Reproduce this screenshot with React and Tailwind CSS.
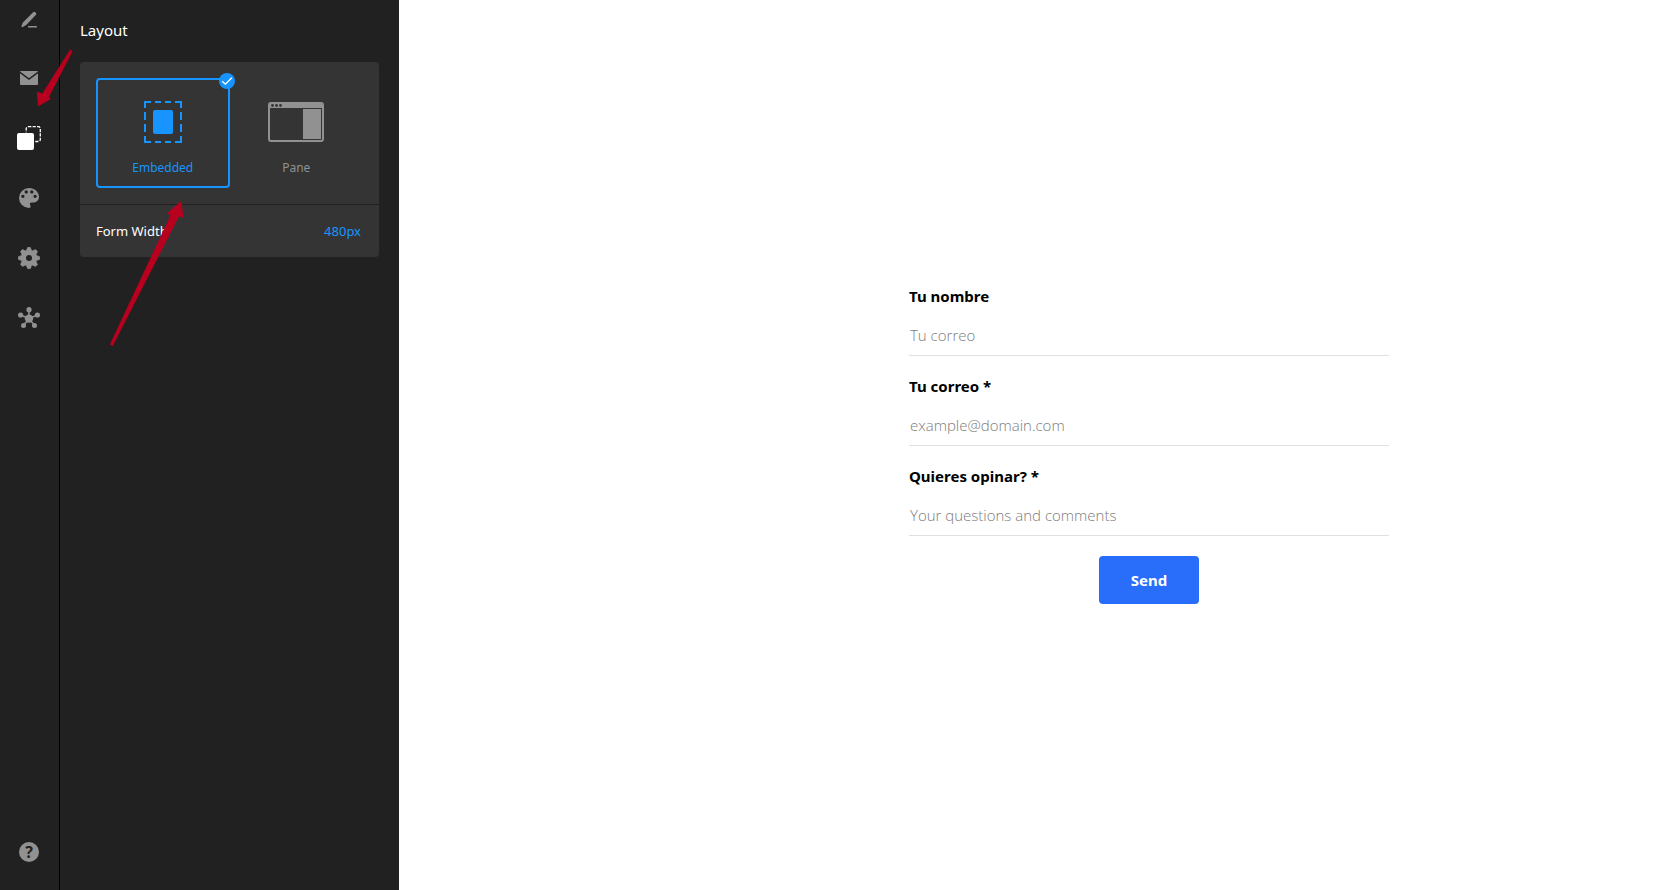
import { useState } from "react";
import clsx from "clsx";

const gearPoints = () => {
  const points = [];
  for (let i = 0; i < 8; i++) {
    const base = (i * Math.PI) / 4 - Math.PI / 2;
    [
      [-0.3, 8],
      [-0.13, 10.6],
      [0.13, 10.6],
      [0.3, 8],
    ].forEach(([offset, r]) => {
      const x = 12 + r * Math.cos(base + offset);
      const y = 12 + r * Math.sin(base + offset);
      points.push(`${x.toFixed(2)} ${y.toFixed(2)}`);
    });
  }
  return `M${points.join("L")}Z`;
};

const PencilIcon = () => (
  <svg width="24" height="24" viewBox="0 0 24 24" fill="currentColor">
    <path d="M15.9 6.6a1.9 1.9 0 0 1 2.9 2.5l-9.6 10-4 2.1-.9-.7 1.6-4z" />
    <rect x="11" y="20" width="9" height="1.6" rx=".4" />
  </svg>
);

const MailIcon = () => (
  <svg width="24" height="24" viewBox="0 0 24 24">
    <rect x="3" y="5" width="18" height="14" rx="1" fill="currentColor" />
    <path d="M3 6.4l9 6.6 9-6.6" fill="none" stroke="#212121" strokeWidth="1.5" />
  </svg>
);

const LayoutIcon = () => (
  <svg width="24" height="24" viewBox="0 0 24 24">
    <rect
      x="9.2"
      y=".7"
      width="14.1"
      height="14.8"
      rx="2"
      fill="none"
      stroke="currentColor"
      strokeWidth="1.3"
      strokeDasharray="3.2 1.2"
    />
    <rect x="-.6" y="6.4" width="18.2" height="18" fill="#212121" />
    <rect y="7" width="17" height="17" rx="2" fill="currentColor" />
  </svg>
);

const PaletteIcon = () => (
  <svg width="20" height="20" viewBox="3 3 18 18" fill="currentColor">
    <path d="M12 3a9 9 0 0 0 0 18c.83 0 1.5-.67 1.5-1.5 0-.39-.15-.74-.39-1.01-.23-.26-.38-.61-.38-.99 0-.83.67-1.5 1.5-1.5H16c2.76 0 5-2.24 5-5 0-4.42-4.03-8-9-8zm-5.5 9a1.5 1.5 0 1 1 0-3 1.5 1.5 0 0 1 0 3zm3-4a1.5 1.5 0 1 1 0-3 1.5 1.5 0 0 1 0 3zm5 0a1.5 1.5 0 1 1 0-3 1.5 1.5 0 0 1 0 3zm3 4a1.5 1.5 0 1 1 0-3 1.5 1.5 0 0 1 0 3z" />
  </svg>
);

const GearIcon = () => (
  <svg width="24" height="24" viewBox="0 0 24 24" fill="currentColor">
    <path d={gearPoints()} stroke="currentColor" strokeWidth=".8" strokeLinejoin="round" />
    <circle cx="12" cy="12" r="3" fill="#212121" />
  </svg>
);

const HubIcon = () => (
  <svg width="24" height="24" viewBox="0 0 24 24" fill="currentColor">
    <path
      d="M12 12.5V3.5M12 12.5L3.6 9M12 12.5L20.4 9M12 12.5L6.5 19.6M12 12.5l5.5 7.1"
      stroke="currentColor"
      strokeWidth="1.6"
    />
    <circle cx="12" cy="12.6" r="4.2" />
    <circle cx="12" cy="3.7" r="2.6" />
    <circle cx="3.6" cy="9" r="2.6" />
    <circle cx="20.4" cy="9" r="2.6" />
    <circle cx="6.5" cy="19.6" r="2.5" />
    <circle cx="17.5" cy="19.6" r="2.5" />
  </svg>
);

const EmbeddedIcon = () => (
  <svg width="38" height="42" viewBox="0 0 38 42">
    <g fill="none" stroke="currentColor" strokeWidth="2">
      <path d="M0 1h7M11 1h6M21 1h6M31 1h7M0 41h7M11 41h6M21 41h6M31 41h7" />
      <path d="M1 0v7M1 11v8M1 23v8M1 35v7M37 0v7M37 11v8M37 23v8M37 35v7" />
    </g>
    <rect x="9" y="9" width="20" height="24" rx="2" fill="currentColor" />
  </svg>
);

const PaneIcon = () => (
  <svg width="56" height="40" viewBox="0 0 56 40">
    <rect x="1" y="1" width="54" height="38" rx="2" fill="none" stroke="currentColor" strokeWidth="2" />
    <rect x="1" y="1" width="54" height="5" fill="currentColor" />
    <rect x="35" y="7" width="18" height="30" fill="currentColor" />
    <g fill="#343434">
      <circle cx="4.5" cy="3.5" r="1.4" />
      <circle cx="8.5" cy="3.5" r="1.4" />
      <circle cx="12.5" cy="3.5" r="1.4" />
    </g>
  </svg>
);

const tools = [
  { name: "Edit", icon: <PencilIcon /> },
  { name: "Email", icon: <MailIcon /> },
  { name: "Layout", icon: <LayoutIcon /> },
  { name: "Style", icon: <PaletteIcon /> },
  { name: "Settings", icon: <GearIcon /> },
  { name: "Integrations", icon: <HubIcon /> },
];

const layouts = [
  { name: "Embedded", icon: <EmbeddedIcon /> },
  { name: "Pane", icon: <PaneIcon /> },
];

const fields = [
  { id: "name", type: "text", label: "Tu nombre", placeholder: "Tu correo" },
  { id: "email", type: "email", label: "Tu correo *", placeholder: "example@domain.com" },
  { id: "message", type: "text", label: "Quieres opinar? *", placeholder: "Your questions and comments" },
];

const ToolRail = ({ active, onSelect }) => (
  <aside className="flex w-[60px] shrink-0 flex-col justify-between overflow-hidden border-r border-black pb-2 text-[#919191]">
    <nav className="-mt-3 flex w-[58px] flex-col">
      {tools.map((tool) => (
        <button
          key={tool.name}
          type="button"
          aria-label={tool.name}
          onClick={() => onSelect(tool.name)}
          className={clsx(
            "flex h-15 cursor-pointer items-center justify-center",
            active === tool.name && "text-white"
          )}
        >
          {tool.icon}
        </button>
      ))}
    </nav>
    <button
      type="button"
      aria-label="Help"
      className="flex h-15 w-[58px] cursor-pointer items-center justify-center"
    >
      <span className="flex size-5 items-center justify-center rounded-full bg-[#919191] text-base font-bold text-[#212121]">
        ?
      </span>
    </button>
  </aside>
);

const LayoutOption = ({ option, checked, onChange }) => (
  <label
    className={clsx(
      "relative flex h-[110px] cursor-pointer flex-col items-center rounded border-2 pt-[21px] text-xs leading-5",
      checked ? "border-[#1894ff] text-[#1894ff]" : "border-transparent text-[#919191]"
    )}
  >
    <input
      type="radio"
      name="layout"
      value={option.name}
      checked={checked}
      onChange={onChange}
      className="sr-only"
    />
    <span className="flex h-[42px] items-center">{option.icon}</span>
    <span className="mt-[15px]">{option.name}</span>
    {checked && (
      <span className="absolute -top-[7px] -right-[7px] size-4 rounded-full bg-[#1894ff]">
        <svg width="16" height="16" viewBox="0 0 16 16" fill="none" stroke="#fff" strokeWidth="1.3">
          <path d="M3.2 8.2l3.2 3 6.4-6.4" />
        </svg>
      </span>
    )}
  </label>
);

const LayoutPanel = () => {
  const [layout, setLayout] = useState("Embedded");
  const [width, setWidth] = useState("480px");

  return (
    <section className="w-[339px] shrink-0 px-5 pt-5">
      <h2 className="text-[15px] leading-5 text-white">Layout</h2>
      <div className="mt-[22px] rounded bg-[#343434]">
        <div className="grid grid-cols-2 border-b border-[#212121] p-4">
          {layouts.map((option) => (
            <LayoutOption
              key={option.name}
              option={option}
              checked={layout === option.name}
              onChange={() => setLayout(option.name)}
            />
          ))}
        </div>
        <div className="flex items-center justify-between p-4 text-[13px] leading-5">
          <label htmlFor="form-width" className="text-white">
            Form Width
          </label>
          <input
            id="form-width"
            value={width}
            onChange={(e) => setWidth(e.target.value)}
            className="w-20 px-0.5 text-right text-[#1894ff] outline-none"
          />
        </div>
      </div>
    </section>
  );
};

const FormPreview = () => (
  <main className="flex grow items-center justify-center bg-white pl-[234px]">
    <form
      onSubmit={(e) => e.preventDefault()}
      className="flex w-full max-w-[480px] flex-col items-center gap-5 text-[15px] leading-5"
    >
      {fields.map((field) => (
        <div key={field.id} className="flex w-full flex-col gap-2">
          <label htmlFor={field.id} className="font-bold text-black">
            {field.label}
          </label>
          <input
            id={field.id}
            type={field.type}
            placeholder={field.placeholder}
            className="h-[42px] w-full border-b border-[#e0e0e0] px-px font-['Open_Sans',sans-serif] font-light outline-none placeholder:text-[#7c7c7c]"
          />
        </div>
      ))}
      <button
        type="submit"
        className="h-12 cursor-pointer rounded bg-[#286efa] px-8 font-bold text-white"
      >
        Send
      </button>
    </form>
  </main>
);

// hand-drawn pointers over the rail and the layout card
const Pointers = () => (
  <svg
    width="200"
    height="360"
    viewBox="0 0 200 360"
    fill="#b8001f"
    stroke="#b8001f"
    strokeLinejoin="round"
    className="pointer-events-none absolute top-0 left-0"
  >
    <path d="M70.2 50.2L72.2 51.2 48.2 97.4l2.2 1.4L38.4 105.8 37.4 92.2l5 2z" />
    <path d="M110.4 344.4L112.6 345.4 179 215.4l3.8 1.8L181 201.8 167.4 213.4l3.8 1.6z" />
  </svg>
);

const App = () => {
  const [tool, setTool] = useState("Layout");

  return (
    <div className="relative flex min-h-screen bg-[#212121] font-['Noto_Sans','Open_Sans',sans-serif]">
      <ToolRail active={tool} onSelect={setTool} />
      <LayoutPanel />
      <FormPreview />
      <Pointers />
    </div>
  );
};

export default App;
